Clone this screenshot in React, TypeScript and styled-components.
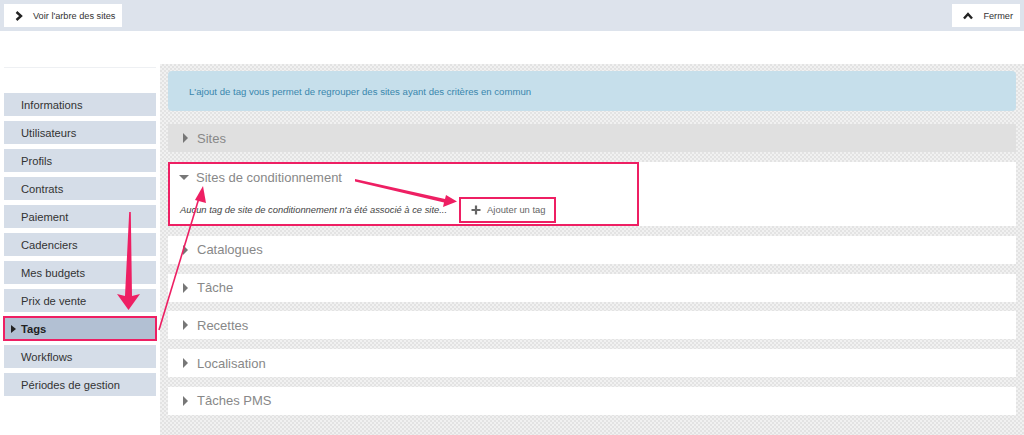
import React from "react";
import styled, { createGlobalStyle, css } from "styled-components";

const pink = "#ee1f63";

const GlobalStyle = createGlobalStyle`
  html, body {
    margin: 0;
    padding: 0;
    background: #fff;
    font-family: "Liberation Sans", Arial, sans-serif;
  }
  * {
    box-sizing: border-box;
  }
`;

const Page = styled.div`
  position: relative;
  width: 1024px;
  height: 435px;
  overflow: hidden;
`;

const TopBar = styled.div`
  display: flex;
  justify-content: space-between;
  align-items: center;
  height: 31px;
  padding: 0 4px;
  background: #dde3ec;
`;

const BarButton = styled.div`
  display: flex;
  align-items: center;
  gap: 10px;
  height: 23px;
  padding: 0 7px 0 11px;
  background: #fff;
  font-size: 9.2px;
  color: #333;
  svg {
    flex-shrink: 0;
  }
`;

const Main = styled.div`
  display: flex;
  height: 404px;
`;

const Sidebar = styled.div`
  width: 160px;
  padding: 36px 4px 0 4px;
  flex-shrink: 0;
`;

const SideRule = styled.div`
  height: 1px;
  background: #eef0f3;
  margin-bottom: 25px;
`;

const SideList = styled.div`
  display: flex;
  flex-direction: column;
  gap: 5px;
`;

const SideItem = styled.div<{ active?: boolean }>`
  position: relative;
  display: flex;
  align-items: center;
  height: 23px;
  padding-left: 17px;
  background: #d5dde8;
  font-size: 11.2px;
  color: #333;

  ${({ active }) =>
    active &&
    css`
      background: #b2c0d3;
      font-weight: bold;
      color: #222;
      outline: 2px solid ${pink};
      outline-offset: -1px;
      &::before {
        content: "";
        position: absolute;
        left: 7px;
        top: 8px;
        border-left: 5px solid #222;
        border-top: 4px solid transparent;
        border-bottom: 4px solid transparent;
      }
    `}
`;

const Content = styled.div`
  flex: 1;
  margin-top: 33px;
  padding: 7px 8px 0 8px;
  background-color: #f1f1f1;
  background-image: repeating-conic-gradient(#e3e3e3 0% 25%, #f1f1f1 0% 50%);
  background-size: 4px 4px;
  display: flex;
  flex-direction: column;
`;

const Alert = styled.div`
  height: 40px;
  display: flex;
  align-items: center;
  padding-left: 21px;
  background: #c6dfeb;
  border-radius: 4px;
  font-size: 9.6px;
  color: #3a87ad;
  margin-bottom: 13px;
`;

const Row = styled.div<{ grey?: boolean }>`
  display: flex;
  align-items: center;
  gap: 8px;
  height: 28px;
  padding-left: 13px;
  margin-bottom: 9.75px;
  background: ${({ grey }) => (grey ? "#e0e0e0" : "#fff")};
  font-size: 13px;
  color: #888;
  flex-shrink: 0;
`;

const Caret = styled.span<{ open?: boolean }>`
  display: inline-block;
  width: 0;
  height: 0;
  ${({ open }) =>
    open
      ? css`
          border-top: 5px solid #777;
          border-left: 5px solid transparent;
          border-right: 5px solid transparent;
          margin-right: -1px;
        `
      : css`
          border-left: 5px solid #777;
          border-top: 5px solid transparent;
          border-bottom: 5px solid transparent;
          margin-left: 2px;
          margin-right: 1px;
        `}
`;

const OpenPanel = styled.div`
  height: 64px;
  background: #fff;
  margin-bottom: 10px;
  flex-shrink: 0;
`;

const Highlight = styled.div`
  width: 471px;
  height: 64px;
  border: 2px solid ${pink};
  padding: 6px 0 0 9px;
`;

const PanelTitle = styled.div`
  display: flex;
  align-items: center;
  gap: 8px;
  height: 16px;
  font-size: 13px;
  color: #888;
`;

const PanelBody = styled.div`
  display: flex;
  align-items: center;
  gap: 12px;
  margin-top: 11px;
  margin-left: 1px;
`;

const EmptyText = styled.span`
  font-style: italic;
  font-size: 9.4px;
  color: #444;
  white-space: nowrap;
`;

const AddButton = styled.div`
  display: flex;
  align-items: center;
  gap: 6px;
  height: 26px;
  padding: 0 9px 0 10px;
  border: 2px solid ${pink};
  font-size: 9.4px;
  color: #666;
`;

const Overlay = styled.svg`
  position: absolute;
  left: 0;
  top: 0;
  pointer-events: none;
`;

const ChevronRight = () => (
  <svg width="8" height="10" viewBox="0 0 8 10">
    <path d="M1.5 1 L6 5 L1.5 9" fill="none" stroke="#222" strokeWidth="2.4" />
  </svg>
);

const ChevronUp = () => (
  <svg width="10" height="8" viewBox="0 0 10 8">
    <path d="M1 6.5 L5 2 L9 6.5" fill="none" stroke="#222" strokeWidth="2.4" />
  </svg>
);

const Plus = () => (
  <svg width="10" height="10" viewBox="0 0 10 10">
    <path d="M5 0.5 V9.5 M0.5 5 H9.5" stroke="#666" strokeWidth="2.2" />
  </svg>
);

const menu = [
  "Informations",
  "Utilisateurs",
  "Profils",
  "Contrats",
  "Paiement",
  "Cadenciers",
  "Mes budgets",
  "Prix de vente",
  "Tags",
  "Workflows",
  "Périodes de gestion",
];

const sections = ["Catalogues", "Tâche", "Recettes", "Localisation", "Tâches PMS"];

const App: React.FC = () => {
  return (
    <Page>
      <GlobalStyle />
      <TopBar>
        <BarButton>
          <ChevronRight />
          <span>Voir l'arbre des sites</span>
        </BarButton>
        <BarButton>
          <ChevronUp />
          <span>Fermer</span>
        </BarButton>
      </TopBar>
      <Main>
        <Sidebar>
          <SideRule />
          <SideList>
            {menu.map((item) => (
              <SideItem key={item} active={item === "Tags"}>
                {item}
              </SideItem>
            ))}
          </SideList>
        </Sidebar>
        <Content>
          <Alert>L'ajout de tag vous permet de regrouper des sites ayant des critères en commun</Alert>
          <Row grey>
            <Caret />
            <span>Sites</span>
          </Row>
          <OpenPanel>
            <Highlight>
              <PanelTitle>
                <Caret open />
                <span>Sites de conditionnement</span>
              </PanelTitle>
              <PanelBody>
                <EmptyText>Aucun tag de site de conditionnement n'a été associé à ce site...</EmptyText>
                <AddButton>
                  <Plus />
                  <span>Ajouter un tag</span>
                </AddButton>
              </PanelBody>
            </Highlight>
          </OpenPanel>
          {sections.map((s) => (
            <Row key={s}>
              <Caret />
              <span>{s}</span>
            </Row>
          ))}
        </Content>
      </Main>
      <Overlay width="1024" height="435" viewBox="0 0 1024 435">
        {/* down arrow to Tags */}
        <polygon points="129.2,212 130.8,212 132,296 140,294 128.5,310 117,294 125,296" fill={pink} />
        {/* Tags to section title */}
        <line x1="159" y1="330" x2="199" y2="198" stroke={pink} strokeWidth="1.6" />
        <polygon points="203,186 206,203 195,200" fill={pink} />
        {/* title to add button */}
        <polygon points="355,179 355,181.4 444,202.5 443,207 457,201.5 446,195 445,199" fill={pink} />
      </Overlay>
    </Page>
  );
};

export default App;
